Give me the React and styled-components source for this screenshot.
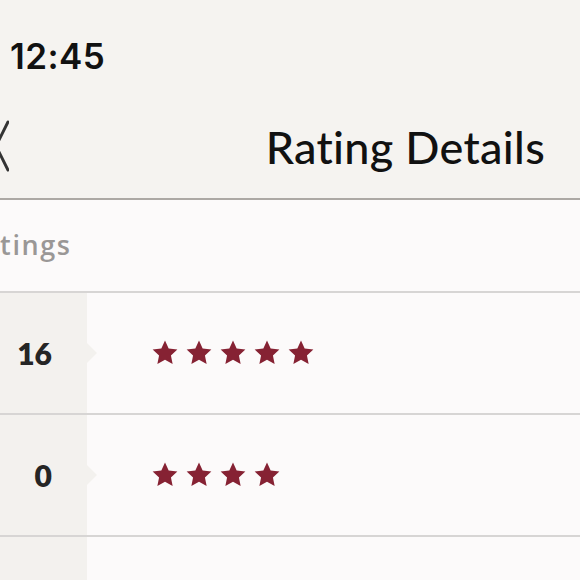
import React from "react";
import styled, { createGlobalStyle } from "styled-components";

const Global = createGlobalStyle`
  html, body { margin: 0; padding: 0; background: #fcfafa; }
  #root { width: 580px; height: 580px; }
`;

const Screen = styled.div`
  width: 580px;
  height: 580px;
  overflow: hidden;
  background: #fcfafa;
  display: flex;
  flex-direction: column;
`;

const TopArea = styled.div`
  flex: none;
  background: #f5f3f0;
  border-bottom: 2px solid #aca8a4;
  display: flex;
  flex-direction: column;
`;

const StatusBar = styled.div`
  height: 100px;
  display: flex;
  align-items: center;
  padding-left: 10px;
  padding-top: 12px;
  box-sizing: border-box;
  font-family: Inter, "Liberation Sans", sans-serif;
  font-weight: 600;
  font-size: 35px;
  color: #111;
  letter-spacing: 0.4px;
`;

const NavBar = styled.div`
  height: 98px;
  display: flex;
  align-items: center;
  justify-content: space-between;
  padding-right: 35px;
  padding-bottom: 4px;
  box-sizing: border-box;
`;

const Back = styled.svg`
  width: 14px;
  height: 52px;
  margin-left: -5px;
  margin-top: -2px;
`;

const Title = styled.h1`
  margin: 0;
  font-family: Lato, "Liberation Sans", sans-serif;
  font-weight: 500;
  font-size: 45px;
  color: #111;
  letter-spacing: 0.3px;
`;

const Summary = styled.div`
  flex: none;
  height: 93px;
  display: flex;
  align-items: center;
  border-bottom: 2px solid #d7d5d4;
  overflow: hidden;
  padding-bottom: 2px;
  box-sizing: border-box;
`;

const SummaryText = styled.span`
  font-family: "Open Sans", "Liberation Sans", sans-serif;
  font-weight: 600;
  font-size: 27px;
  letter-spacing: 1.6px;
  color: #9a9796;
  margin-left: -36px;
  white-space: nowrap;
`;

const Row = styled.div`
  flex: none;
  height: 122px;
  display: grid;
  grid-template-columns: 87px 1fr;
  border-bottom: 2px solid #d7d5d4;
  box-sizing: border-box;
`;

const CountCell = styled.div`
  position: relative;
  background: #f3f1ee;
  display: flex;
  align-items: center;
  justify-content: flex-end;
  padding-right: 35px;
  font-family: Lato, "Liberation Sans", sans-serif;
  font-weight: 800;
  font-size: 30px;
  color: #252525;

  &::after {
    content: "";
    position: absolute;
    right: -10px;
    top: 50%;
    margin-top: -10px;
    border-top: 10px solid transparent;
    border-bottom: 10px solid transparent;
    border-left: 10px solid #f3f1ee;
  }
`;

const StarsCell = styled.div`
  display: flex;
  align-items: center;
  gap: 8px;
  padding-left: 65px;
`;

const StarIcon = styled.svg`
  width: 26px;
  height: 26px;
  flex: none;
`;

const Star = () => (
  <StarIcon viewBox="0 0 25 25">
    <polygon
      points="12.5,0.5 16.03,8.15 24.39,9.14 18.21,14.85 19.85,23.11 12.5,19 5.15,23.11 6.79,14.85 0.61,9.14 8.97,8.15"
      fill="#862233"
    />
  </StarIcon>
);

const rows = [
  { count: 16, stars: 5 },
  { count: 0, stars: 4 },
  { count: 0, stars: 3 },
];

export default function App() {
  return (
    <>
      <Global />
      <Screen>
        <TopArea>
          <StatusBar>12:45</StatusBar>
          <NavBar>
            <Back viewBox="0 0 14 52">
              <polyline
                points="13,2 1,26 13,50"
                fill="none"
                stroke="#333"
                strokeWidth="3"
                strokeLinecap="round"
                strokeLinejoin="round"
              />
            </Back>
            <Title>Rating Details</Title>
          </NavBar>
        </TopArea>
        <Summary>
          <SummaryText>Ratings</SummaryText>
        </Summary>
        {rows.map((r, i) => (
          <Row key={i}>
            <CountCell>{r.count}</CountCell>
            <StarsCell>
              {Array.from({ length: r.stars }).map((_, j) => (
                <Star key={j} />
              ))}
            </StarsCell>
          </Row>
        ))}
      </Screen>
    </>
  );
}
